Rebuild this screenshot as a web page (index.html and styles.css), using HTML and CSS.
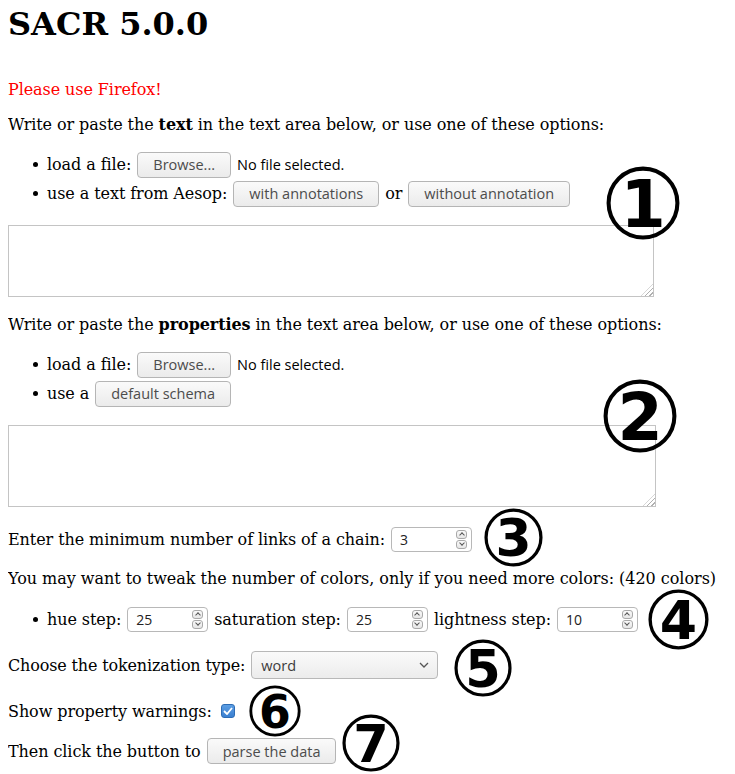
FILE: index.html
```html
<!DOCTYPE html>
<html lang="en">
<head>
<meta charset="utf-8">
<title>SACR 5.0.0</title>
<link rel="stylesheet" href="styles.css">
</head>
<body>
<h1 class="title">SACR 5.0.0</h1>
<p class="warn">Please use Firefox!</p>
<p class="intro">Write or paste the <b>text</b> in the text area below, or use one of these options:</p>
<ul class="opts">
  <li><span>load a file:</span><span class="btn">Browse...</span><span class="nofile">No file selected.</span></li>
  <li><span>use a text from Aesop:</span><span class="btn">with annotations</span><span>or</span><span class="btn">without annotation</span></li>
</ul>
<div class="ta ta1"></div>
<p class="intro">Write or paste the <b>properties</b> in the text area below, or use one of these options:</p>
<ul class="opts">
  <li><span>load a file:</span><span class="btn">Browse...</span><span class="nofile">No file selected.</span></li>
  <li><span>use a</span><span class="btn">default schema</span></li>
</ul>
<div class="ta ta2"></div>
<div class="row row-links"><span>Enter the minimum number of links of a chain:</span><span class="num"><span>3</span><span class="spin"><span class="arr up"></span><span class="arr down"></span></span></span></div>
<p class="colors">You may want to tweak the number of colors, only if you need more colors: (420 colors)</p>
<ul class="opts steps">
  <li><span>hue step:</span><span class="num"><span>25</span><span class="spin"><span class="arr up"></span><span class="arr down"></span></span></span><span>saturation step:</span><span class="num"><span>25</span><span class="spin"><span class="arr up"></span><span class="arr down"></span></span></span><span>lightness step:</span><span class="num"><span>10</span><span class="spin"><span class="arr up"></span><span class="arr down"></span></span></span></li>
</ul>
<div class="row row-tok"><span>Choose the tokenization type:</span><span class="select"><span>word</span><svg class="chev" width="10" height="6" viewBox="0 0 10 6"><path d="M1 1 L5 5 L9 1" fill="none" stroke="#555" stroke-width="1.3"/></svg></span></div>
<div class="row row-warn"><span>Show property warnings:</span><span class="check"><svg width="10" height="8" viewBox="0 0 10 8"><path d="M1 4 L4 7 L9 1" fill="none" stroke="#fff" stroke-width="1.8"/></svg></span></div>
<div class="row row-parse"><span>Then click the button to</span><span class="btn">parse the data</span></div>

<svg class="mark m1" viewBox="0 0 100 100"><circle cx="50" cy="50" r="46.5" /><text x="50" y="82">1</text></svg>
<svg class="mark m2" viewBox="0 0 100 100"><circle cx="50" cy="50" r="46.5" /><text x="50" y="82">2</text></svg>
<svg class="mark m3" viewBox="0 0 100 100"><circle cx="50" cy="50" r="46.5" /><text x="50" y="82">3</text></svg>
<svg class="mark m4" viewBox="0 0 100 100"><circle cx="50" cy="50" r="46.5" /><text x="50" y="82">4</text></svg>
<svg class="mark m5" viewBox="0 0 100 100"><circle cx="50" cy="50" r="46.5" /><text x="50" y="82">5</text></svg>
<svg class="mark m6" viewBox="0 0 100 100"><circle cx="50" cy="50" r="46.5" /><text x="50" y="82">6</text></svg>
<svg class="mark m7" viewBox="0 0 100 100"><circle cx="50" cy="50" r="46.5" /><text x="50" y="82">7</text></svg>
</body>
</html>
```

FILE: styles.css
```css
body {
  margin: 6px 8px 8px 8px;
  font-family: "DejaVu Serif", serif;
  font-size: 16px;
  letter-spacing: -0.08px;
  color: #000;
  background: #fff;
}

.title {
  font-size: 32px;
  margin: 0 0 37px 0;
  line-height: 37px;
  letter-spacing: 0;
}

.warn {
  color: #ff0000;
  margin: 0 0 16px 0;
}

.intro {
  margin: 16px 0;
}

.opts {
  list-style: none;
  margin: 16px 0;
  padding-left: 39px;
}

.opts li {
  display: flex;
  align-items: center;
  gap: 6px;
  height: 29px;
}

.opts li::before {
  content: "";
  width: 5px;
  height: 5px;
  border-radius: 50%;
  background: #000;
  margin-left: -14px;
  margin-right: 3px;
}

.btn {
  display: inline-flex;
  align-items: center;
  height: 26px;
  box-sizing: border-box;
  padding: 0 15px;
  border: 1px solid #b5b5b5;
  border-radius: 4px;
  background: linear-gradient(#fafafa, #ebebeb);
  font-family: "Open Sans", "Noto Sans", sans-serif;
  font-size: 14.5px;
  letter-spacing: 0;
  color: #4c4c4c;
}

.nofile {
  font-family: "Open Sans", "Noto Sans", sans-serif;
  font-size: 14.5px;
  letter-spacing: 0;
  color: #000;
}

.ta {
  position: relative;
  box-sizing: border-box;
  border: 1px solid #c4c4c4;
  background: #fff;
}

.ta::after {
  content: "";
  position: absolute;
  right: 0;
  bottom: 0;
  width: 12px;
  height: 12px;
  background: repeating-linear-gradient(135deg, transparent 0 2px, #b0b0b0 2px 3px);
  clip-path: polygon(100% 0, 100% 100%, 0 100%);
}

.ta1 {
  width: 646px;
  height: 72px;
  margin-top: 17px;
  margin-bottom: 18px;
}

.ta2 {
  width: 648px;
  height: 82px;
  margin-top: 17px;
  margin-bottom: 18px;
}

.row {
  display: flex;
  align-items: center;
  gap: 6px;
}

.row-links {
  height: 28px;
}

.colors {
  margin: 16px 0;
  letter-spacing: -0.03px;
}

.steps li {
  height: 30px;
}

.num {
  display: inline-flex;
  align-items: center;
  justify-content: space-between;
  box-sizing: border-box;
  width: 81px;
  height: 25px;
  padding-left: 8px;
  padding-right: 4px;
  border: 1px solid #b8b8b8;
  border-radius: 4px;
  background: #fff;
  font-family: "Open Sans", "Noto Sans", sans-serif;
  font-size: 14px;
  letter-spacing: 0;
  color: #222;
}

.spin {
  display: flex;
  flex-direction: column;
  gap: 1px;
}

.arr {
  display: block;
  position: relative;
  width: 11px;
  height: 9px;
  box-sizing: border-box;
  border: 1px solid #a9a9a9;
  border-radius: 3px;
  background: linear-gradient(#fafafa, #e6e6e6);
}

.arr::after {
  content: "";
  position: absolute;
  left: 2.5px;
  width: 3px;
  height: 3px;
  border-left: 1px solid #555;
  border-top: 1px solid #555;
}

.arr.up::after {
  top: 2.5px;
  transform: rotate(45deg);
}

.arr.down::after {
  top: 0.5px;
  transform: rotate(225deg);
}

.row-tok {
  height: 30px;
  margin-top: 16px;
  letter-spacing: -0.15px;
}

.select {
  display: inline-flex;
  align-items: center;
  justify-content: space-between;
  box-sizing: border-box;
  width: 187px;
  height: 28px;
  padding: 0 8px 0 9px;
  border: 1px solid #b8b8b8;
  border-radius: 4px;
  background: linear-gradient(#fafafa, #ececec);
  font-family: "Open Sans", "Noto Sans", sans-serif;
  font-size: 14.5px;
  letter-spacing: 0;
  color: #3c3c3c;
}

.row-warn {
  height: 30px;
  margin-top: 16px;
}

.check {
  display: inline-flex;
  align-items: center;
  justify-content: center;
  box-sizing: border-box;
  width: 14px;
  height: 14px;
  border: 1px solid #2d6cb5;
  border-radius: 3px;
  background: linear-gradient(#5b9de3, #3b80d1);
  margin-left: 3px;
}

.row-parse {
  height: 30px;
  margin-top: 10px;
}

.mark {
  position: absolute;
  overflow: visible;
}

.mark circle {
  fill: none;
  stroke: #000;
  stroke-width: 5.5;
}

.mark text {
  font-family: "DejaVu Sans", sans-serif;
  font-weight: bold;
  font-size: 88px;
  text-anchor: middle;
  fill: #000;
}

.m1 { left: 606px; top: 166px; width: 74px; height: 74px; }
.m2 { left: 603px; top: 379px; width: 74px; height: 74px; }
.m3 { left: 484px; top: 508px; width: 59px; height: 59px; }
.m4 { left: 648px; top: 589px; width: 61px; height: 61px; }
.m5 { left: 454px; top: 639px; width: 58px; height: 58px; }
.m6 { left: 249px; top: 685px; width: 52px; height: 52px; }
.m7 { left: 342px; top: 714px; width: 58px; height: 58px; }
```
